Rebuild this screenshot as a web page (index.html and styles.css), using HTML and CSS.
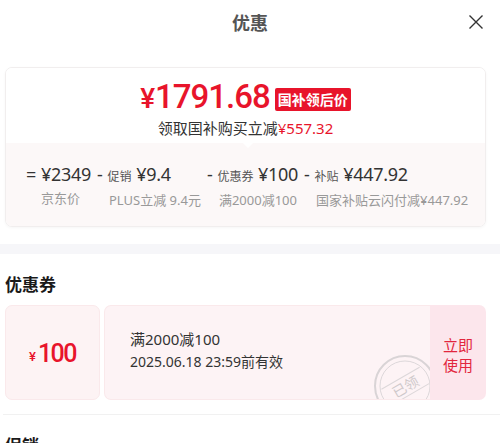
FILE: index.html
```html
<!DOCTYPE html>
<html lang="zh-CN">
<head>
    <meta charset="UTF-8">
    <meta name="viewport" content="width=device-width, initial-scale=1.0">
    <title>优惠</title>
    <link rel="stylesheet" href="styles.css">
</head>
<body>
    <div class="sheet">
        <header class="head">
            <h2>优惠</h2>
            <button class="close" aria-label="关闭">
                <svg width="16" height="16" viewBox="0 0 16 16"><path d="M1.5 1.5 L14.5 14.5 M14.5 1.5 L1.5 14.5" stroke="#333" stroke-width="1.4" fill="none"/></svg>
            </button>
        </header>

        <section class="summary">
            <div class="summary-top">
                <div class="price-line">
                    <span class="price"><span class="yen">¥</span>1791.68</span>
                    <span class="tag">国补领后价</span>
                </div>
                <p class="save">领取国补购买立减<em>¥557.32</em></p>
            </div>
            <div class="formula">
                <div class="col">
                    <div class="val"><span class="op">=</span> <b>¥2349</b></div>
                    <div class="lbl">京东价</div>
                </div>
                <div class="col">
                    <div class="val"><span class="op">-</span> <small>促销</small> <b>¥9.4</b></div>
                    <div class="lbl">PLUS立减 9.4元</div>
                </div>
                <div class="col">
                    <div class="val"><span class="op">-</span> <small>优惠券</small> <b>¥100</b></div>
                    <div class="lbl">满2000减100</div>
                </div>
                <div class="col">
                    <div class="val"><span class="op">-</span> <small>补贴</small> <b>¥447.92</b></div>
                    <div class="lbl">国家补贴云闪付减¥447.92</div>
                </div>
            </div>
        </section>

        <div class="band"></div>

        <section class="block">
            <h3>优惠券</h3>
            <div class="coupon">
                <div class="coupon-amount"><span class="yen">¥</span>100</div>
                <div class="coupon-info">
                    <p class="rule">满2000减100</p>
                    <p class="date">2025.06.18 23:59前有效</p>
                    <svg class="stamp" width="64" height="64" viewBox="0 0 64 64">
                        <circle cx="32" cy="32" r="30" fill="none" stroke="#d9d4d6" stroke-width="2"/>
                        <circle cx="32" cy="32" r="25" fill="none" stroke="#dcd7d9" stroke-width="1"/>
                        <g transform="rotate(-30 32 32)">
                            <line x1="10" y1="23" x2="54" y2="23" stroke="#dcd7d9" stroke-width="1"/>
                            <line x1="10" y1="42" x2="54" y2="42" stroke="#dcd7d9" stroke-width="1"/>
                            <text x="32" y="38" text-anchor="middle" font-size="14" fill="#cfc9cb" font-family="Noto Sans CJK SC, sans-serif">已领</text>
                        </g>
                    </svg>
                </div>
                <div class="coupon-use">立即<br>使用</div>
            </div>
        </section>

        <div class="divider"></div>

        <section class="block">
            <h3>促销</h3>
        </section>
    </div>
</body>
</html>
```

FILE: styles.css
```css
body {
    margin: 0;
    background: #fff;
    font-family: "Noto Sans", "Noto Sans CJK SC", sans-serif;
    color: #333;
    overflow: hidden;
}
.sheet {
    width: 500px;
}
p {
    margin: 0;
}
.head {
    position: relative;
    height: 44px;
    display: flex;
    align-items: center;
    justify-content: center;
}
.head h2 {
    margin: 0;
    font-size: 18px;
    font-weight: bold;
    color: #555;
}
.close {
    position: absolute;
    right: 16px;
    top: 14px;
    padding: 0;
    border: none;
    background: none;
    line-height: 0;
}
.summary {
    margin: 23px 14px 0 5px;
    border: 1px solid #f1eeee;
    border-radius: 7px;
    box-shadow: 0 1px 3px rgba(0, 0, 0, 0.04);
    overflow: hidden;
}
.summary-top {
    position: relative;
    height: 75px;
    padding-top: 13px;
    box-sizing: border-box;
    text-align: center;
    background: #fff;
}
.summary-top::after {
    content: "";
    position: absolute;
    left: 237px;
    bottom: -5px;
    border-left: 5px solid transparent;
    border-right: 5px solid transparent;
    border-top: 5px solid #fff;
}
.price-line {
    display: flex;
    justify-content: center;
    align-items: center;
    gap: 5px;
    height: 34px;
}
.price {
    font-family: Roboto, "Noto Sans", sans-serif;
    font-size: 33px;
    font-weight: 500;
    color: #e8142b;
    letter-spacing: -1px;
    line-height: 34px;
}
.price .yen {
    font-size: 28px;
    margin-right: 1px;
}
.tag {
    background: #e8142b;
    color: #fff;
    font-family: "Noto Sans CJK SC", sans-serif;
    font-size: 14px;
    font-weight: bold;
    line-height: 23px;
    padding: 0 3px;
    border-radius: 2px;
    margin-top: 2px;
}
.save {
    margin-top: 3px;
    font-size: 15px;
    line-height: 20px;
    color: #333;
}
.save em {
    font-style: normal;
    color: #e8142b;
}
.formula {
    display: flex;
    gap: 6px;
    height: 83px;
    padding: 19px 0 0 20px;
    box-sizing: border-box;
    background: #fcf8f8;
}
.col .val {
    font-size: 18px;
    line-height: 24px;
    color: #333;
    white-space: nowrap;
}
.col .val b {
    font-weight: normal;
    letter-spacing: -0.3px;
}
.col .val .op {
    font-size: 18px;
}
.col .val small {
    font-family: "Noto Sans CJK SC", sans-serif;
    font-size: 12px;
    color: #555;
}
.col .lbl {
    margin-top: 3px;
    padding-left: 12px;
    font-size: 13px;
    line-height: 18px;
    color: #999;
    white-space: nowrap;
}
.col:first-child .lbl {
    padding-left: 15px;
}
.band {
    height: 10px;
    margin-top: 17px;
    background: #f6f6f9;
}
.block {
    padding: 19px 14px 0 5px;
}
.block h3 {
    margin: 0;
    font-family: "Noto Sans CJK SC", sans-serif;
    font-size: 17px;
    line-height: 22px;
    font-weight: bold;
    color: #1a1a1a;
}
.coupon {
    display: flex;
    height: 95px;
    margin-top: 10px;
}
.coupon-amount {
    position: relative;
    width: 95px;
    display: flex;
    align-items: center;
    justify-content: center;
    background: #fdf3f4;
    border: 1px solid #fae9eb;
    border-radius: 7px;
    box-sizing: border-box;
    color: #e8142b;
    font-family: Roboto, "Noto Sans", sans-serif;
    font-size: 25px;
    font-weight: 500;
    letter-spacing: -1.5px;
    padding-top: 2px;
}
.coupon-amount .yen {
    font-size: 13px;
    letter-spacing: 0;
    margin-top: 6px;
    margin-right: 2px;
}
.coupon-info {
    position: relative;
    flex: 1;
    margin-left: 4px;
    padding: 22px 0 0 25px;
    background: #fdf3f5;
    border: 1px solid #fae9eb;
    border-right: none;
    border-radius: 7px 0 0 7px;
    overflow: hidden;
}
.rule {
    font-size: 15px;
    line-height: 22px;
    color: #333;
}
.date {
    margin-top: 1px;
    font-size: 14px;
    line-height: 22px;
    color: #333;
}
.stamp {
    position: absolute;
    left: 268px;
    top: 48px;
}
.coupon-use {
    width: 56px;
    display: flex;
    align-items: center;
    justify-content: center;
    text-align: center;
    background: #fce6ec;
    border-radius: 0 7px 7px 0;
    color: #e2263e;
    font-family: "Noto Sans CJK SC", sans-serif;
    font-size: 15px;
    line-height: 20px;
    padding-top: 4px;
    box-sizing: border-box;
}
.divider {
    height: 1px;
    margin: 14px 0 0 3px;
    background: #f1f1f1;
}
```
